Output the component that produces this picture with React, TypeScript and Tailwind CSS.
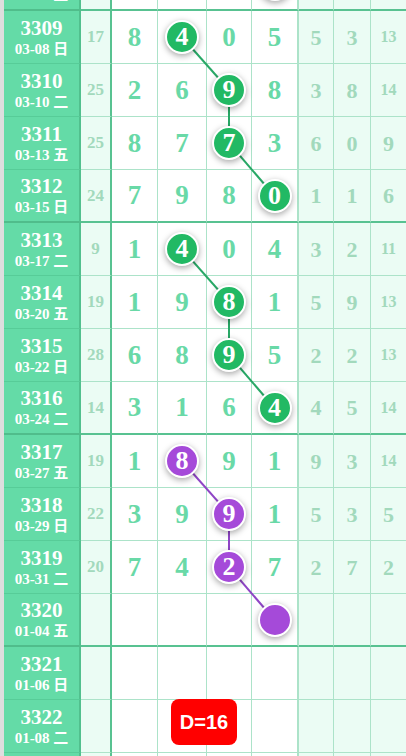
import React from 'react';

type Row = {
  no: string;
  date: string;
  sum?: string;
  d?: string[];
  r?: string[];
  ball?: number;
  purple?: boolean;
  end?: boolean;
};

const rows: Row[] = [
  { no: '3308', date: '03-06 二', sum: '12', d: ['3', '6', '1', '2'], r: ['4', '1', '12'], ball: 4, end: true },
  { no: '3309', date: '03-08 日', sum: '17', d: ['8', '4', '0', '5'], r: ['5', '3', '13'], ball: 2 },
  { no: '3310', date: '03-10 二', sum: '25', d: ['2', '6', '9', '8'], r: ['3', '8', '14'], ball: 3 },
  { no: '3311', date: '03-13 五', sum: '25', d: ['8', '7', '7', '3'], r: ['6', '0', '9'], ball: 3 },
  { no: '3312', date: '03-15 日', sum: '24', d: ['7', '9', '8', '0'], r: ['1', '1', '6'], ball: 4, end: true },
  { no: '3313', date: '03-17 二', sum: '9', d: ['1', '4', '0', '4'], r: ['3', '2', '11'], ball: 2 },
  { no: '3314', date: '03-20 五', sum: '19', d: ['1', '9', '8', '1'], r: ['5', '9', '13'], ball: 3 },
  { no: '3315', date: '03-22 日', sum: '28', d: ['6', '8', '9', '5'], r: ['2', '2', '13'], ball: 3 },
  { no: '3316', date: '03-24 二', sum: '14', d: ['3', '1', '6', '4'], r: ['4', '5', '14'], ball: 4, end: true },
  { no: '3317', date: '03-27 五', sum: '19', d: ['1', '8', '9', '1'], r: ['9', '3', '14'], ball: 2, purple: true },
  { no: '3318', date: '03-29 日', sum: '22', d: ['3', '9', '9', '1'], r: ['5', '3', '5'], ball: 3, purple: true },
  { no: '3319', date: '03-31 二', sum: '20', d: ['7', '4', '2', '7'], r: ['2', '7', '2'], ball: 3, purple: true },
  { no: '3320', date: '01-04 五', ball: 4, purple: true, end: true },
  { no: '3321', date: '01-06 日' },
  { no: '3322', date: '01-08 二' },
  { no: '3323', date: '01-10 四' },
];

const serif = "font-['Liberation_Serif','Noto_Sans_CJK_SC',serif]";
const digitW = ['w-[46px] border-r', 'w-[49px] border-r', 'w-[45px] border-r', 'w-[47px] border-r-2 border-r-[#58c291]'];
const sideW = ['w-[35px] border-r', 'w-[37px] border-r', 'w-[35px]'];

const colX: Record<number, number> = { 1: 134.5, 2: 182, 3: 229, 4: 274.5 };
const rowY = (i: number) => -42 + 53 * i + 26;

function Ball({ n, purple }: { n?: string; purple?: boolean }) {
  return (
    <div
      className={`relative z-[2] w-[34px] h-[34px] rounded-full border-2 border-white flex items-center justify-center text-white font-bold text-[26px] leading-none shadow-[0_2px_6px_rgba(0,0,0,0.35)] ${
        purple ? 'bg-[#a54ad9]' : 'bg-[#22b964]'
      }`}
    >
      {n}
    </div>
  );
}

function TrendRow({ row }: { row: Row }) {
  const line = row.end ? 'border-b-2 border-b-[#58c291]' : 'border-b border-b-[#ace3c9]';
  return (
    <div className="flex h-[53px] shrink-0">
      <div className="w-[4px] shrink-0 bg-[#dedede]" />
      <div
        className={`w-[77px] shrink-0 bg-[#64dba7] border-r-2 border-r-[#52c08e] flex flex-col items-center justify-center text-white font-bold ${
          row.end ? 'border-b-2 border-b-[#50bd8b]' : 'border-b border-b-[#57cc98]'
        }`}
      >
        <span className="text-[21px] leading-[21px]">{row.no}</span>
        <span className="text-[15px] leading-[15px] mt-[3px]">{row.date}</span>
      </div>
      <div
        className={`w-[31px] shrink-0 bg-[#ebfcf4] border-r-2 border-r-[#58c291] ${line} flex items-center justify-center text-[17px] font-bold text-[#a2d9bc]`}
      >
        {row.sum}
      </div>
      {digitW.map((w, k) => (
        <div
          key={k}
          className={`${w} shrink-0 bg-white border-r-[#ace3c9] ${line} flex items-center justify-center text-[27px] font-bold text-[#69d9a7]`}
        >
          {row.ball === k + 1 ? <Ball n={row.d?.[k]} purple={row.purple} /> : row.d?.[k]}
        </div>
      ))}
      {sideW.map((w, k) => {
        const v = row.r?.[k] ?? '';
        return (
          <div
            key={k}
            className={`${w} shrink-0 bg-[#ebfcf4] border-r-[#ace3c9] ${line} flex items-center justify-center font-bold text-[#a2d9bc] ${
              v.length > 1 ? 'text-[16px]' : 'text-[22px]'
            }`}
          >
            {v}
          </div>
        );
      })}
    </div>
  );
}

export default function App() {
  const segs: { x1: number; y1: number; x2: number; y2: number; purple?: boolean }[] = [];
  rows.forEach((r, i) => {
    const next = rows[i + 1];
    if (!r.end && r.ball && next && next.ball) {
      segs.push({ x1: colX[r.ball], y1: rowY(i), x2: colX[next.ball], y2: rowY(i + 1), purple: next.purple });
    }
  });

  return (
    <div className={`relative w-[406px] h-[756px] overflow-hidden bg-white ${serif}`}>
      <div className="flex flex-col -mt-[42px]">
        {rows.map((r) => (
          <TrendRow key={r.no} row={r} />
        ))}
      </div>
      <svg className="absolute left-0 top-0 z-[1] pointer-events-none" width="406" height="756">
        {segs.map((s, i) => (
          <line key={i} x1={s.x1} y1={s.y1} x2={s.x2} y2={s.y2} stroke={s.purple ? '#8f45c6' : '#28a866'} strokeWidth="2" />
        ))}
      </svg>
      <div className="absolute left-[171px] top-[699px] z-[3] w-[66px] h-[46px] rounded-[8px] bg-[#ff0000] flex items-center justify-center text-white font-bold text-[20px] font-['Liberation_Sans',Arial,sans-serif]">
        D=16
      </div>
    </div>
  );
}
